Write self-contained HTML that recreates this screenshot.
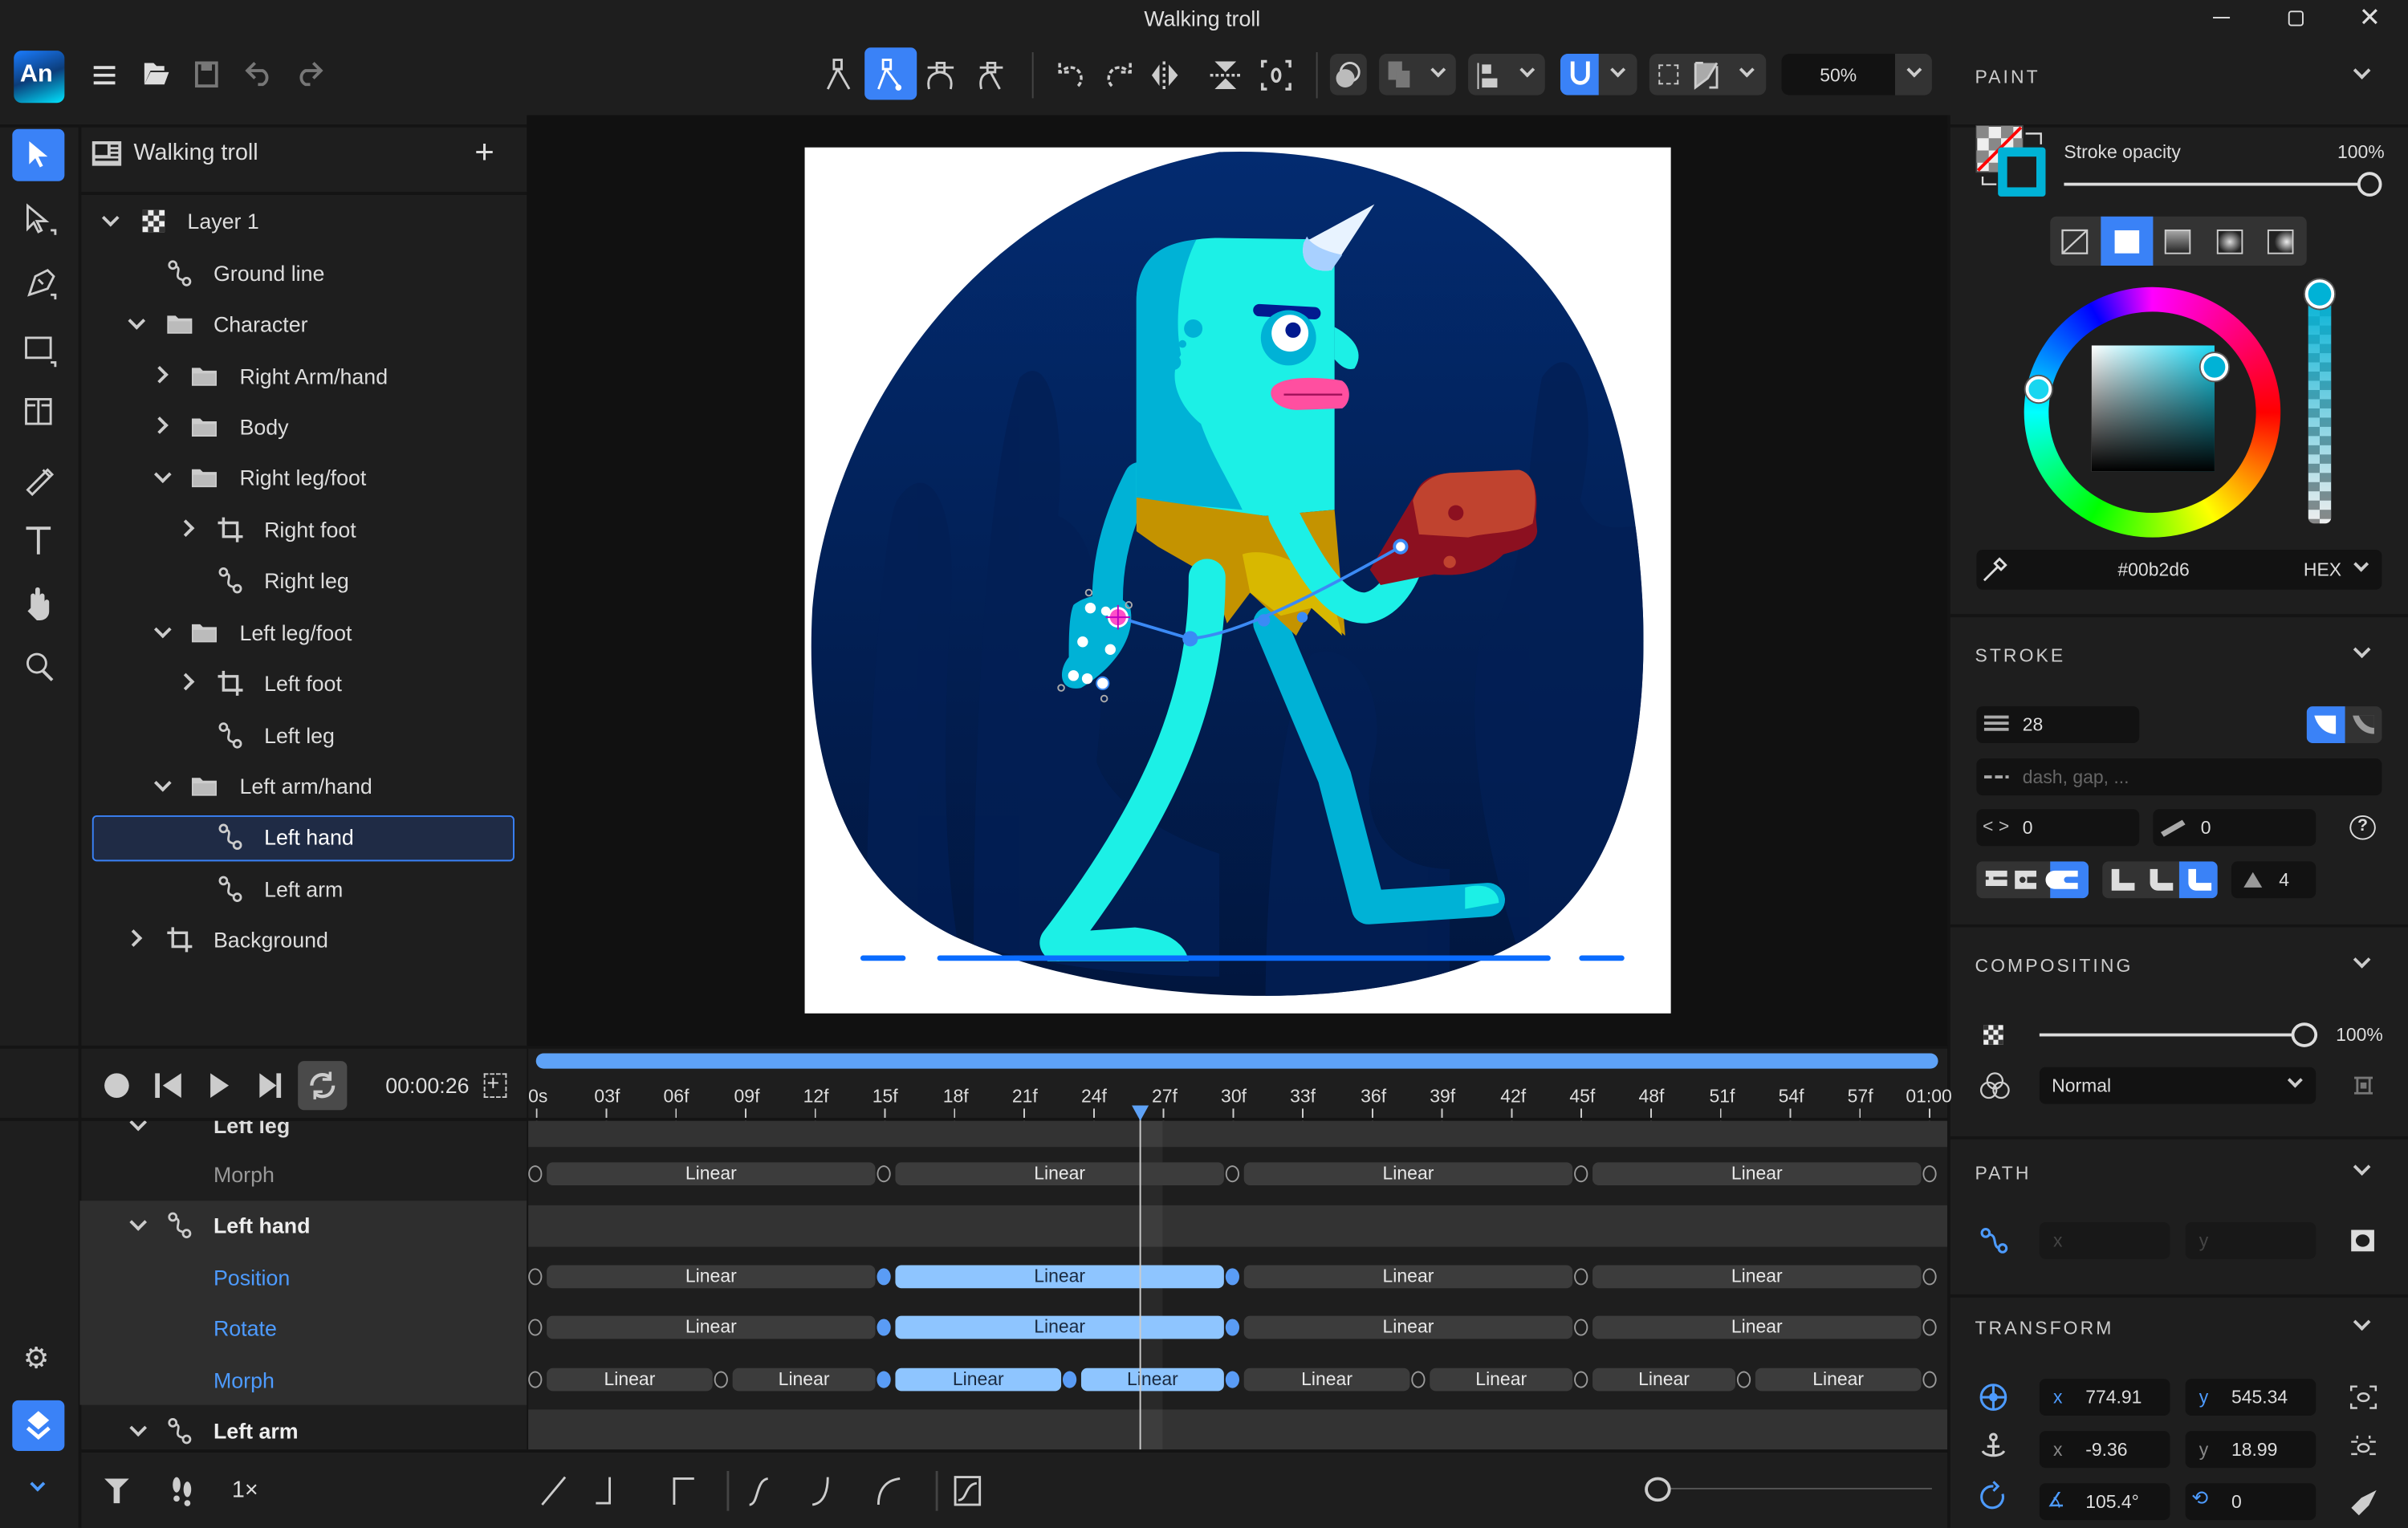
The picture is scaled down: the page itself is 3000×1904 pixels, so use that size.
<!DOCTYPE html>
<html><head><meta charset="utf-8">
<style>
*{margin:0;padding:0;box-sizing:border-box}
html,body{width:3000px;height:1904px;overflow:hidden;background:#1e1e1e}
#w{position:absolute;left:0;top:0;width:1568px;height:995px;transform:scale(1.91327);transform-origin:0 0;background:#1e1e1e;font-family:"Liberation Sans",sans-serif;color:#ddd;font-size:14px}
.a{position:absolute}
.t{position:absolute;white-space:nowrap;line-height:1}
.hd{position:absolute;font-size:12px;letter-spacing:1.6px;color:#ccc;left:1286px}
.chv{position:absolute;width:8px;height:8px;border-right:2px solid #ccc;border-bottom:2px solid #ccc;transform:rotate(45deg)}
.fld{position:absolute;background:#121212;border-radius:4px;height:24px}
.bar{position:absolute;height:15px;border-radius:4px;background:#3c3c3c;color:#e8e8e8;font-size:12px;text-align:center;line-height:15px}
.bar.h{background:#8ec5ff;color:#1a2a40}
.k{position:absolute;width:9px;height:11px;border-radius:50%;border:1.5px solid #999;background:#1e1e1e}
.k.f{background:#5a9cf5;border-color:#5a9cf5}
svg{position:absolute;overflow:visible}
</style></head><body><div id="w">
<svg width="0" height="0" style="position:absolute">
<defs>
<symbol id="pth" viewBox="0 0 20 20"><circle cx="5" cy="4" r="2.6" fill="none" stroke="#ccc" stroke-width="1.6"/><circle cx="15" cy="16" r="2.6" fill="none" stroke="#ccc" stroke-width="1.6"/><path d="M7 5 C12 6 6 12 10 14 L12.5 15" fill="none" stroke="#ccc" stroke-width="1.6"/></symbol>
<symbol id="fold" viewBox="0 0 20 20"><path d="M1 4 h6 l2 2 h10 v11 h-18z" fill="#ccc"/><rect x="2" y="8" width="16" height="8" fill="#bbb"/></symbol>
<symbol id="crop" viewBox="0 0 20 20"><path d="M5 1 v14 h14 M1 5 h14 v14" fill="none" stroke="#ccc" stroke-width="2"/></symbol>
<symbol id="chk" viewBox="0 0 20 20"><rect x="2" y="2" width="16" height="16" fill="#eee"/><path d="M2 2h4v4h-4zM10 2h4v4h-4zM6 6h4v4h-4zM14 6h4v4h-4zM2 10h4v4h-4zM10 10h4v4h-4zM6 14h4v4h-4zM14 14h4v4h-4z" fill="#333"/></symbol>
</defs></svg>

<!-- title bar -->
<div class="t" style="left:745px;top:5px;font-size:14px;color:#e0e0e0">Walking troll</div>
<div class="a" style="left:1441px;top:11px;width:11px;height:1px;background:#ddd"></div>
<div class="a" style="left:1490px;top:7px;width:10px;height:10px;border:1.3px solid #ddd;border-radius:2px"></div>
<div class="t" style="left:1536px;top:3px;font-size:17px;color:#ddd">✕</div>

<!-- logo -->
<div class="a" style="left:9px;top:33px;width:33px;height:34px;border-radius:5px;background:linear-gradient(160deg,#1a7cff,#0c3d7a 50%,#00e5ff)"></div>
<div class="t" style="left:13px;top:41px;font-size:16px;font-weight:bold;color:#fff">An</div>
<svg style="left:60px;top:41px" width="16" height="16"><path d="M1 3h14M1 8h14M1 13h14" stroke="#ddd" stroke-width="2"/></svg>
<svg style="left:93px;top:40px" width="18" height="16"><path d="M1 1h6l2 2h5v3H5L1 15z" fill="#ddd"/><path d="M5 7h12l-3 8H1z" fill="#ddd"/></svg>
<svg style="left:127px;top:40px" width="15" height="17"><rect x="1" y="1" width="13" height="15" fill="none" stroke="#777" stroke-width="2"/><rect x="4" y="1" width="7" height="5" fill="#777"/></svg>
<svg style="left:160px;top:40px" width="17" height="16"><path d="M6 1L1 6l5 5M1 6h10a5 5 0 0 1 0 9H8" fill="none" stroke="#777" stroke-width="2"/></svg>
<svg style="left:193px;top:40px" width="17" height="16"><path d="M11 1l5 5-5 5M16 6H6a5 5 0 0 0 0 9h3" fill="none" stroke="#777" stroke-width="2"/></svg>

<!-- top toolbar -->
<div class="a" style="left:563px;top:31px;width:34px;height:34px;background:#3a82f7;border-radius:4px"></div>
<svg style="left:538px;top:38px" width="120" height="22" stroke="#ccc" stroke-width="1.5" fill="none">
<path d="M5 1h5v6h-5zM7.5 7 L1 20M7.5 7L15 20"/>
<path d="M37 1h5v6h-5zM39 7L34 20M39 7 L47 18" stroke="#fff"/><circle cx="47" cy="19" r="2" fill="#fff" stroke="none"/>
<path d="M72 3h5v6h-5zM66 6h17M74 9C66 10 66 16 67 20M74 9C82 10 82 16 81 20"/>
<path d="M105 3h5v6h-5zM100 6h15M107 9C100 10 100 16 101 20M107 9L113 20"/>
</svg>
<div class="a" style="left:672px;top:34px;width:1px;height:30px;background:#444"></div>
<svg style="left:688px;top:38px" width="160" height="22" stroke="#ccc" stroke-width="1.8" fill="none">
<path d="M14 18 A7 7 0 1 0 4 8 M2 3v6h6" stroke-dasharray="3 1.5"/>
<path d="M36 18 A7 7 0 1 1 46 8 M48 3v6h-6" stroke-dasharray="3 1.5"/>
<path d="M70 2v18" stroke-dasharray="2 2"/><path d="M67 4v14l-5-7zM73 4v14l6-7z" fill="#ccc" stroke="none"/>
<path d="M100 11h20" stroke-dasharray="2 1.5"/><path d="M103 2h14l-7 7zM103 20h14l-7-7z" fill="#ccc" stroke="none"/>
<path d="M137 2h-3v4M149 2h3v4M137 20h-3v-4M149 20h3v-4"/><ellipse cx="143" cy="11" rx="2.5" ry="4"/>
</svg>
<div class="a" style="left:857px;top:34px;width:1px;height:30px;background:#444"></div>
<div class="a" style="left:866px;top:35px;width:24px;height:27px;background:#333;border-radius:5px"></div>
<svg style="left:869px;top:40px" width="18" height="18"><circle cx="10" cy="7" r="6" fill="none" stroke="#ccc" stroke-width="1.5"/><circle cx="7" cy="11" r="6" fill="#bbb"/></svg>
<div class="a" style="left:898px;top:35px;width:50px;height:27px;background:#333;border-radius:5px"></div>
<div class="a" style="left:904px;top:40px;width:9px;height:12px;background:#777"></div><div class="a" style="left:909px;top:46px;width:9px;height:11px;background:#777"></div>
<div class="chv" style="left:933px;top:42px;width:7px;height:7px"></div>
<div class="a" style="left:956px;top:35px;width:50px;height:27px;background:#333;border-radius:5px"></div>
<div class="a" style="left:962px;top:41px;width:1px;height:17px;background:#ccc"></div><div class="a" style="left:965px;top:42px;width:6px;height:6px;background:#ccc"></div><div class="a" style="left:965px;top:51px;width:10px;height:6px;background:#ccc"></div>
<div class="chv" style="left:991px;top:42px;width:7px;height:7px"></div>
<div class="a" style="left:1016px;top:35px;width:50px;height:27px;background:#333;border-radius:5px;overflow:hidden"><div style="width:25px;height:27px;background:#3a82f7"></div></div>
<svg style="left:1021px;top:39px" width="16" height="20"><path d="M3 1v9a5 5 0 0 0 10 0V1" fill="none" stroke="#fff" stroke-width="2.5"/></svg>
<div class="chv" style="left:1050px;top:42px;width:7px;height:7px"></div>
<div class="a" style="left:1074px;top:35px;width:76px;height:27px;background:#333;border-radius:5px"></div>
<div class="a" style="left:1080px;top:42px;width:13px;height:13px;border:1.5px dashed #ccc"></div>
<svg style="left:1102px;top:39px" width="20" height="20"><path d="M2 2h5M2 2v16l8-6 6-10" stroke="#ccc" stroke-width="1.5" fill="#aaa"/><path d="M16 4v14h-5" stroke="#ccc" stroke-width="1.5" fill="none"/></svg>
<div class="chv" style="left:1134px;top:42px;width:7px;height:7px"></div>
<div class="a" style="left:1160px;top:35px;width:98px;height:27px;background:#333;border-radius:5px"></div>
<div class="a" style="left:1160px;top:35px;width:74px;height:27px;background:#121212;border-radius:5px 0 0 5px"></div>
<div class="t" style="left:1185px;top:43px;font-size:12px;color:#ddd">50%</div>
<div class="chv" style="left:1243px;top:42px;width:7px;height:7px"></div>

<!-- left tool column -->
<div class="a" style="left:51px;top:82px;width:2px;height:913px;background:#141414"></div>
<div class="a" style="left:0;top:81px;width:1568px;height:2px;background:#141414"></div>
<div class="a" style="left:8px;top:84px;width:34px;height:34px;background:#3a82f7;border-radius:4px"></div>
<svg style="left:18px;top:91px" width="14" height="20"><path d="M1 1v15l4-4 3 6 2-1-3-6h6z" fill="#fff"/></svg>
<svg style="left:15px;top:132px" width="22" height="300" fill="none" stroke="#ccc" stroke-width="1.5">
<path d="M3 2v15l4-4 3 6 2-1-3-6h6z"/><path d="M18 18h3v3" />
<path d="M4 60l4-12 8-4 4 4-4 8-12 4zM10 50l3 3"/><path d="M18 60h3v3"/>
<rect x="2" y="88" width="16" height="13"/><path d="M18 104h3v3"/>
<path d="M2 128h16v16H2zM10 128v16M2 132h6M12 132h6" />
<path d="M3 187l3-3 10-10 3 3-10 10-3 3zM13 174l5 5"/>
<path d="M2 212h16M10 212v17" stroke-width="2"/>
<path d="M5 264v-8a1.5 1.5 0 0 1 3 0v-4a1.5 1.5 0 0 1 3 0v4a1.5 1.5 0 0 1 3 0v4a1.5 1.5 0 0 1 3 0v6c0 4-3 6-6 6h-2l-6-6" fill="#ccc" stroke="none"/>
<circle cx="9" cy="300" r="6"/><path d="M13 305l6 6" stroke-width="2"/>
</svg>
<div class="t" style="left:15px;top:876px;font-size:19px;color:#ccc">⚙</div>
<div class="a" style="left:8px;top:912px;width:34px;height:33px;background:#3a82f7;border-radius:4px"></div>
<svg style="left:16px;top:918px" width="18" height="22"><path d="M9 1l7 6-7 6-7-6z" fill="#fff"/><path d="M2 12l7 6 7-6" fill="none" stroke="#fff" stroke-width="2.5"/></svg>
<div class="chv" style="left:21px;top:963px;width:7px;height:7px;border-color:#4d9bff"></div>

<!-- layers panel -->
<svg style="left:60px;top:92px" width="19" height="16"><rect x="0" y="0" width="19" height="16" fill="#ccc"/><rect x="2" y="2" width="8" height="7" fill="#1e1e1e"/><path d="M12 3h5M12 6h5M12 9h5M2 12h15" stroke="#1e1e1e" stroke-width="1.5"/></svg>
<div class="t" style="left:87px;top:92px;font-size:15px;color:#ddd">Walking troll</div>
<div class="t" style="left:309px;top:88px;font-size:22px;color:#ddd;font-weight:300">+</div>
<div class="a" style="left:52px;top:125px;width:291px;height:2px;background:#141414"></div>

<div class="a" style="left:60px;top:531px;width:275px;height:30px;border:1px solid #3a82f7;border-radius:3px;background:#1f2b45"></div>

<div class="chv" style="left:68px;top:138px;transform:rotate(45deg)"></div>
<svg style="left:91px;top:135px" width="18" height="18"><use href="#chk"/></svg>
<div class="t" style="left:122px;top:137px">Layer 1</div>
<svg style="left:108px;top:169px" width="18" height="18"><use href="#pth"/></svg>
<div class="t" style="left:139px;top:171px">Ground line</div>
<div class="chv" style="left:85px;top:205px"></div>
<svg style="left:108px;top:202px" width="18" height="18"><use href="#fold"/></svg>
<div class="t" style="left:139px;top:204px">Character</div>
<div class="chv" style="left:100px;top:240px;transform:rotate(-45deg)"></div>
<svg style="left:124px;top:236px" width="18" height="18"><use href="#fold"/></svg>
<div class="t" style="left:156px;top:238px">Right Arm/hand</div>
<div class="chv" style="left:100px;top:273px;transform:rotate(-45deg)"></div>
<svg style="left:124px;top:269px" width="18" height="18"><use href="#fold"/></svg>
<div class="t" style="left:156px;top:271px">Body</div>
<div class="chv" style="left:102px;top:305px"></div>
<svg style="left:124px;top:302px" width="18" height="18"><use href="#fold"/></svg>
<div class="t" style="left:156px;top:304px">Right leg/foot</div>
<div class="chv" style="left:117px;top:340px;transform:rotate(-45deg)"></div>
<svg style="left:141px;top:336px" width="18" height="18"><use href="#crop"/></svg>
<div class="t" style="left:172px;top:338px">Right foot</div>
<svg style="left:141px;top:369px" width="18" height="18"><use href="#pth"/></svg>
<div class="t" style="left:172px;top:371px">Right leg</div>
<div class="chv" style="left:102px;top:406px"></div>
<svg style="left:124px;top:403px" width="18" height="18"><use href="#fold"/></svg>
<div class="t" style="left:156px;top:405px">Left leg/foot</div>
<div class="chv" style="left:117px;top:440px;transform:rotate(-45deg)"></div>
<svg style="left:141px;top:436px" width="18" height="18"><use href="#crop"/></svg>
<div class="t" style="left:172px;top:438px">Left foot</div>
<svg style="left:141px;top:470px" width="18" height="18"><use href="#pth"/></svg>
<div class="t" style="left:172px;top:472px">Left leg</div>
<div class="chv" style="left:102px;top:506px"></div>
<svg style="left:124px;top:503px" width="18" height="18"><use href="#fold"/></svg>
<div class="t" style="left:156px;top:505px">Left arm/hand</div>
<svg style="left:141px;top:536px" width="18" height="18"><use href="#pth"/></svg>
<div class="t" style="left:172px;top:538px;color:#fff">Left hand</div>
<svg style="left:141px;top:570px" width="18" height="18"><use href="#pth"/></svg>
<div class="t" style="left:172px;top:572px">Left arm</div>
<div class="chv" style="left:83px;top:607px;transform:rotate(-45deg)"></div>
<svg style="left:108px;top:603px" width="18" height="18"><use href="#crop"/></svg>
<div class="t" style="left:139px;top:605px">Background</div>

<!-- canvas area -->
<div class="a" style="left:343px;top:75px;width:925px;height:607px;background:#111"></div>
<div class="a" style="left:524px;top:96px;width:564px;height:564px;background:#fff;overflow:hidden">
<svg style="left:0;top:0" width="564" height="564" viewBox="0 0 564 564">
<defs><linearGradient id="bg" x1="0" y1="0" x2="0" y2="1"><stop offset="0" stop-color="#032b70"/><stop offset="1" stop-color="#01163e"/></linearGradient>
<clipPath id="bc"><path d="M270 3 C410 -2 510 70 535 210 C560 340 545 470 470 515 C380 570 200 560 100 515 C20 478 0 390 5 300 C15 180 110 30 270 3Z"/></clipPath></defs>
<path d="M270 3 C410 -2 510 70 535 210 C560 340 545 470 470 515 C380 570 200 560 100 515 C20 478 0 390 5 300 C15 180 110 30 270 3Z" fill="url(#bg)"/>
<g fill="#021f55" opacity=".8" clip-path="url(#bc)">
<path d="M40 520 C40 400 50 250 60 230 C80 200 100 230 95 300 C90 380 90 460 100 520Z"/>
<path d="M110 520 C110 420 115 220 140 150 C160 130 170 180 165 240 C190 250 200 300 190 400 C200 430 240 450 270 460 L270 540 C200 540 150 530 110 520Z"/>
<path d="M470 540 C440 450 430 380 440 320 C470 300 470 200 480 150 C500 120 520 160 505 230 C520 260 535 240 560 250 L560 540Z"/>
<path d="M330 330 C360 320 380 360 370 400 C360 440 380 470 420 470 L420 540 L300 560 C300 480 310 360 330 330Z"/>
</g>
<path d="M218 215 C200 250 195 280 198 310" stroke="#00b2d6" stroke-width="20" fill="none" stroke-linecap="round"/>
<path d="M175 298 C185 290 205 288 212 300 C216 320 200 340 180 352 C165 355 165 340 172 332 C172 320 172 305 175 298Z" fill="#00b2d6"/>
<path d="M303 310 L345 410 L367 495 L445 490" stroke="#00b2d6" stroke-width="22" fill="none" stroke-linejoin="round" stroke-linecap="round"/>
<path d="M430 482 C445 478 452 485 452 492 L430 496Z" fill="#1cf0e6"/>
<path d="M216 230 L216 100 C216 70 240 59 270 59 L345 60 L345 236 L300 240 L216 230Z" fill="#1cf0e6"/>
<path d="M216 230 L216 100 C216 70 235 62 255 60 C245 80 240 110 245 135 C235 150 245 170 258 180 C265 200 275 215 285 236Z" fill="#00b2d6"/>
<g fill="#00b2d6"><circle cx="253" cy="118" r="6"/><circle cx="240" cy="140" r="5"/><circle cx="246" cy="128" r="2.5"/></g>
<path d="M216 228 L300 240 L345 236 L352 318 L330 300 L320 318 L290 290 L275 310 L265 280 L230 260 L216 250Z" fill="#c49300"/>
<path d="M285 265 C300 260 320 270 340 280 L350 318 L330 300 L310 305 L290 290Z" fill="#d8b800"/>
<path d="M262 280 C262 350 240 420 165 518" stroke="#1cf0e6" stroke-width="24" fill="none" stroke-linecap="round"/>
<path d="M158 512 L215 508 C235 510 248 518 250 530 L158 530Z" fill="#1cf0e6"/>
<path d="M312 240 C330 275 345 300 365 300 C380 298 392 280 395 262" stroke="#1cf0e6" stroke-width="20" fill="none" stroke-linecap="round"/>
<path d="M368 275 L398 225 C402 215 410 213 420 212 L465 210 C475 212 478 225 476 240 L477 250 C476 260 465 262 455 265 C445 275 430 280 410 278 L375 285Z" fill="#8c1020"/>
<path d="M396 230 C400 218 410 213 420 212 L465 210 C475 212 478 225 474 245 C462 252 448 250 432 254 L400 252Z" fill="#c0432f"/>
<circle cx="424" cy="238" r="5" fill="#8c1020"/><circle cx="420" cy="270" r="4" fill="#c0432f"/>
<path d="M325 62 C322 75 330 82 343 80 L371 37Z" fill="#e8f3ff"/><path d="M325 62 C322 75 330 82 343 80 L350 70 C340 68 330 64 327 58Z" fill="#a8d0ff"/>
<path d="M296 106 L332 108" stroke="#021a8f" stroke-width="8" stroke-linecap="round"/>
<circle cx="315" cy="124" r="18" fill="#00b2d6"/><circle cx="316" cy="121" r="12" fill="#fff"/><circle cx="318" cy="119" r="5" fill="#021a8f"/>
<path d="M345 117 C360 125 364 135 358 144 C352 146 347 140 345 138Z" fill="#1cf0e6"/>
<path d="M306 155 C315 148 340 150 350 152 C356 156 356 166 350 170 L320 171 C305 170 300 160 306 155Z" fill="#ff4fa0"/>
<path d="M312 161 L350 161" stroke="#a0105a" stroke-width="1.2"/>
<path d="M204 306 L251 320 C270 318 300 310 388 260" stroke="#3b8af5" stroke-width="2" fill="none"/>
<circle cx="251" cy="320" r="5" fill="#3b8af5"/><circle cx="299" cy="308" r="4" fill="#3b8af5"/><circle cx="324" cy="306" r="3.5" fill="#3b8af5"/>
<circle cx="388" cy="260" r="4" fill="#fff" stroke="#3b8af5" stroke-width="2"/>
<g fill="#fff"><circle cx="186" cy="300" r="3.5"/><circle cx="196" cy="302" r="3"/><circle cx="181" cy="322" r="3.5"/><circle cx="199" cy="327" r="3.5"/><circle cx="175" cy="344" r="3.5"/><circle cx="184" cy="346" r="3.5"/><circle cx="194" cy="349" r="4" stroke="#3b8af5"/></g>
<circle cx="204" cy="306" r="6" fill="#ff4fc8" stroke="#fff" stroke-width="1.5"/><path d="M196 306h16M204 298v16" stroke="#c000c0" stroke-width="1"/>
<g fill="none" stroke="#aaa" stroke-width="1"><circle cx="185" cy="290" r="2"/><circle cx="211" cy="298" r="2"/><circle cx="167" cy="352" r="2"/><circle cx="195" cy="359" r="2"/></g>
<g stroke="#0a6cff" stroke-width="3.5" stroke-linecap="round"><path d="M38 528H64M88 528H484M506 528H532"/></g>
</svg></div>

<!-- right panel -->
<div class="a" style="left:1268px;top:75px;width:2px;height:920px;background:#141414"></div>
<div class="hd" style="top:43px">PAINT</div><div class="chv" style="left:1534px;top:42px"></div>
<svg style="left:1287px;top:82px" width="50" height="50">
<rect x="0" y="0" width="30" height="30" fill="#eee" stroke="#444"/><path d="M0 0h8v8H0zM16 0h8v8h-8zM8 8h8v8H8zM24 8h6v8h-6zM0 16h8v8H0zM16 16h8v8h-8zM8 24h8v6H8z" fill="#888"/>
<path d="M1 29L29 1" stroke="red" stroke-width="2"/>
<rect x="14" y="14" width="31" height="32" rx="2" fill="#00b2d6"/><rect x="20" y="20" width="19" height="20" fill="#1e1e1e"/>
<path d="M32 5h10v7M4 33v5h9" stroke="#ddd" stroke-width="1.2" fill="none"/>
</svg>
<div class="t" style="left:1344px;top:93px;font-size:12px;color:#ddd">Stroke opacity</div>
<div class="t" style="left:1522px;top:93px;font-size:12px;color:#ddd">100%</div>
<div class="a" style="left:1344px;top:119px;width:192px;height:2px;background:#ddd"></div>
<div class="a" style="left:1535px;top:112px;width:16px;height:16px;border-radius:50%;border:2px solid #ddd;background:#1e1e1e"></div>
<div class="a" style="left:1335px;top:141px;width:167px;height:32px;background:#333;border-radius:4px"></div>
<div class="a" style="left:1368px;top:141px;width:34px;height:32px;background:#3a82f7"></div>
<svg style="left:1342px;top:149px" width="160" height="18">
<rect x="1" y="1" width="16" height="15" fill="none" stroke="#ccc" stroke-width="1.2"/><path d="M1 16L17 1" stroke="#ccc" stroke-width="1.2"/>
<rect x="35" y="1" width="16" height="15" fill="#fff"/>
<defs><linearGradient id="lg" x1="0" y1="0" x2="0" y2="1"><stop offset="0" stop-color="#aaa"/><stop offset="1" stop-color="#222"/></linearGradient><radialGradient id="rg"><stop offset="0" stop-color="#ddd"/><stop offset="1" stop-color="#222"/></radialGradient><radialGradient id="rg2" cx=".75" cy=".5"><stop offset="0" stop-color="#eee"/><stop offset="1" stop-color="#222"/></radialGradient></defs>
<rect x="68" y="1" width="16" height="15" fill="url(#lg)" stroke="#ccc"/><rect x="102" y="1" width="16" height="15" fill="url(#rg)" stroke="#ccc"/><rect x="135" y="1" width="16" height="15" fill="url(#rg2)" stroke="#ccc"/>
</svg>
<div class="a" style="left:1318px;top:187px;width:167px;height:163px;border-radius:50%;background:conic-gradient(from 0deg,#f0f 0deg,#f00 90deg,#ff0 150deg,#0f0 210deg,#0ff 270deg,#00f 330deg,#f0f 360deg)"></div>
<div class="a" style="left:1334px;top:203px;width:135px;height:131px;border-radius:50%;background:#1e1e1e"></div>
<div class="a" style="left:1362px;top:225px;width:80px;height:82px;background:linear-gradient(to bottom,transparent,#000),linear-gradient(to right,#fff,#1ed9f5)"></div>
<div class="a" style="left:1319px;top:245px;width:17px;height:17px;border-radius:50%;border:2.5px solid #fff;background:#19d6f0;box-shadow:0 0 0 1px #555"></div>
<div class="a" style="left:1433px;top:230px;width:18px;height:18px;border-radius:50%;border:2.5px solid #fff;background:#00b2d6;box-shadow:0 0 0 1px #555"></div>
<div class="a" style="left:1503px;top:188px;width:15px;height:153px;border-radius:4px;background:linear-gradient(to bottom,#00b2d6,rgba(0,178,214,0)),repeating-conic-gradient(#888 0 25%,#eee 0 50%) 0 0/15px 12px"></div>
<div class="a" style="left:1501px;top:182px;width:19px;height:19px;border-radius:50%;border:2.5px solid #fff;background:#00b2d6;box-shadow:0 0 0 1px #555"></div>
<div class="a" style="left:1287px;top:358px;width:264px;height:26px;background:#121212;border-radius:4px"></div>
<svg style="left:1290px;top:362px" width="18" height="18"><path d="M2 16l9-9M9 5l4 4M12 2l4 4-3 3-4-4z" stroke="#ddd" stroke-width="1.5" fill="none"/></svg>
<div class="t" style="left:1379px;top:365px;font-size:12px;color:#ddd">#00b2d6</div>
<div class="t" style="left:1500px;top:365px;font-size:12px;color:#ddd">HEX</div>
<div class="chv" style="left:1534px;top:364px;width:7px;height:7px"></div>
<div class="a" style="left:1270px;top:400px;width:298px;height:2px;background:#141414"></div>

<div class="hd" style="top:420px">STROKE</div><div class="chv" style="left:1534px;top:419px"></div>
<div class="fld" style="left:1287px;top:460px;width:106px"></div>
<div class="a" style="left:1292px;top:466px;width:16px;height:2px;background:#aaa;box-shadow:0 4px #aaa,0 8px #aaa"></div>
<div class="t" style="left:1317px;top:466px;font-size:12px">28</div>
<div class="a" style="left:1502px;top:460px;width:49px;height:24px;background:#333;border-radius:4px;overflow:hidden"><div style="width:25px;height:24px;background:#3a82f7"></div></div>
<svg style="left:1506px;top:465px" width="42" height="14"><path d="M1 1h14v12C8 13 3 8 1 1z" fill="#fff"/><path d="M26 1h14v12C33 13 28 8 26 1z" fill="#999"/><path d="M30 1h10v8C36 9 32 6 30 1z" fill="#333"/></svg>
<div class="fld" style="left:1287px;top:494px;width:264px"></div>
<div class="a" style="left:1292px;top:505px;width:16px;height:2px;background:repeating-linear-gradient(90deg,#aaa 0 5px,transparent 5px 7px)"></div>
<div class="t" style="left:1317px;top:500px;font-size:12px;color:#666">dash, gap, ...</div>
<div class="fld" style="left:1287px;top:527px;width:106px"></div>
<div class="t" style="left:1291px;top:532px;font-size:12px;color:#bbb">&lt; &gt;</div><div class="t" style="left:1317px;top:533px;font-size:12px">0</div>
<div class="fld" style="left:1402px;top:527px;width:106px"></div>
<svg style="left:1406px;top:531px" width="18" height="14"><path d="M1 11L15 3l2 3-14 8z" fill="#aaa"/></svg>
<div class="t" style="left:1433px;top:533px;font-size:12px">0</div>
<div class="a" style="left:1530px;top:531px;width:17px;height:16px;border:1.5px solid #ddd;border-radius:50%;font-size:11px;text-align:center;line-height:13px;font-weight:bold">?</div>
<div class="a" style="left:1287px;top:561px;width:73px;height:24px;background:#333;border-radius:4px;overflow:hidden"><div style="margin-left:48px;width:25px;height:24px;background:#3a82f7"></div></div>
<svg style="left:1292px;top:565px" width="66" height="16" fill="#ddd"><path d="M1 2h14v4H6v2h9v4H1v-4h2V6H1z"/><path d="M20 2h14v4h-6v4h6v4H20z"/><circle cx="25" cy="8" r="2" fill="#333"/><path d="M46 2h15v4h-7a2 2 0 0 0 0 4h7v4H46a6 6 0 0 1 0-12z" fill="#fff"/></svg>
<div class="a" style="left:1369px;top:561px;width:75px;height:24px;background:#333;border-radius:4px;overflow:hidden"><div style="margin-left:50px;width:25px;height:24px;background:#3a82f7"></div></div>
<svg style="left:1374px;top:565px" width="66" height="16"><path d="M1 1h5v9h10v5H1z" fill="#ddd"/><path d="M26 1h5v9h10v5H31a5 5 0 0 1-5-5z" fill="#ddd"/><path d="M51 1h5v9h10v5H56a5 5 0 0 1-5-5z" fill="#fff"/></svg>
<div class="fld" style="left:1453px;top:561px;width:55px"></div>
<svg style="left:1460px;top:567px" width="14" height="12"><path d="M7 1l6 10H1z" fill="#999"/></svg>
<div class="t" style="left:1484px;top:567px;font-size:12px">4</div>
<div class="a" style="left:1270px;top:602px;width:298px;height:2px;background:#141414"></div>

<div class="hd" style="top:622px">COMPOSITING</div><div class="chv" style="left:1534px;top:621px"></div>
<svg style="left:1290px;top:666px" width="16" height="16"><use href="#chk"/></svg>
<div class="a" style="left:1328px;top:673px;width:166px;height:2px;background:#ddd"></div>
<div class="a" style="left:1492px;top:666px;width:17px;height:16px;border-radius:50%;border:2px solid #ddd;background:#1e1e1e"></div>
<div class="t" style="left:1521px;top:668px;font-size:12px">100%</div>
<svg style="left:1289px;top:698px" width="20" height="18" fill="none" stroke="#ccc" stroke-width="1.2"><circle cx="10" cy="6" r="5"/><circle cx="6" cy="12" r="5"/><circle cx="14" cy="12" r="5"/></svg>
<div class="fld" style="left:1328px;top:695px;width:180px"></div>
<div class="t" style="left:1336px;top:701px;font-size:12px">Normal</div>
<div class="chv" style="left:1491px;top:700px;width:7px;height:7px"></div>
<svg style="left:1532px;top:701px" width="14" height="12"><path d="M1 1h12M1 11h12M3 1v10M11 1v10" stroke="#777" stroke-width="1.5"/><rect x="5" y="4" width="4" height="4" fill="#777"/></svg>
<div class="a" style="left:1270px;top:740px;width:298px;height:2px;background:#141414"></div>

<div class="hd" style="top:757px">PATH</div><div class="chv" style="left:1534px;top:756px"></div>
<svg style="left:1289px;top:799px" width="20" height="18" fill="none" stroke="#4d9bff" stroke-width="1.6"><circle cx="4" cy="4" r="2.5"/><circle cx="15" cy="14" r="2.5"/><path d="M6 5c6 0 2 8 7 9"/></svg>
<div class="fld" style="left:1328px;top:796px;width:85px;background:#181818"></div><div class="t" style="left:1337px;top:802px;font-size:12px;color:#444">x</div>
<div class="fld" style="left:1423px;top:796px;width:85px;background:#181818"></div><div class="t" style="left:1432px;top:802px;font-size:12px;color:#444">y</div>
<div class="a" style="left:1531px;top:801px;width:15px;height:14px;background:#ddd"></div><div class="a" style="left:1534px;top:804px;width:9px;height:8px;border-radius:50%;background:#1e1e1e"></div>
<div class="a" style="left:1270px;top:843px;width:298px;height:2px;background:#141414"></div>

<div class="hd" style="top:858px">TRANSFORM</div><div class="chv" style="left:1534px;top:857px"></div>
<svg style="left:1288px;top:900px" width="20" height="90" fill="none" stroke="#4d9bff" stroke-width="1.6">
<circle cx="10" cy="10" r="8"/><path d="M2 10h16M10 2v16"/><circle cx="10" cy="10" r="2" fill="#4d9bff"/>
<g stroke="#ccc"><circle cx="10" cy="36" r="2"/><path d="M10 38v10M6 42h8M3 45c2 4 12 4 14 0"/></g>
<path d="M16 73a7 7 0 1 1-6-5M10 65l3 3-3 3"/>
</svg>
<div class="fld" style="left:1328px;top:898px;width:85px"></div><div class="t" style="left:1337px;top:904px;font-size:12px;color:#4d9bff">x</div><div class="t" style="left:1358px;top:904px;font-size:12px">774.91</div>
<div class="fld" style="left:1423px;top:898px;width:85px"></div><div class="t" style="left:1432px;top:904px;font-size:12px;color:#4d9bff">y</div><div class="t" style="left:1453px;top:904px;font-size:12px">545.34</div>
<div class="fld" style="left:1328px;top:932px;width:85px"></div><div class="t" style="left:1337px;top:938px;font-size:12px;color:#888">x</div><div class="t" style="left:1358px;top:938px;font-size:12px">-9.36</div>
<div class="fld" style="left:1423px;top:932px;width:85px"></div><div class="t" style="left:1432px;top:938px;font-size:12px;color:#888">y</div><div class="t" style="left:1453px;top:938px;font-size:12px">18.99</div>
<div class="fld" style="left:1328px;top:966px;width:85px"></div><div class="t" style="left:1333px;top:970px;font-size:13px;color:#4d9bff">∡</div><div class="t" style="left:1358px;top:972px;font-size:12px">105.4°</div>
<div class="fld" style="left:1423px;top:966px;width:85px"></div><div class="t" style="left:1427px;top:969px;font-size:13px;color:#4d9bff">⟲</div><div class="t" style="left:1453px;top:972px;font-size:12px">0</div>
<svg style="left:1530px;top:902px" width="18" height="85" fill="none" stroke="#ccc" stroke-width="1.3">
<path d="M1 4V1h4M13 1h4v3M1 12v3h4M13 15h4v-3"/><ellipse cx="9" cy="8" rx="3.5" ry="2.5"/>
<path d="M1 37h4M13 37h4M1 45h4M13 45h4M5 35v-2M13 35v-2"/><ellipse cx="9" cy="41" rx="3.5" ry="2.5"/>
<path d="M2 80l6-6 8-4-4 8-6 6z" fill="#ccc"/>
</svg>

<!-- timeline -->
<div class="a" style="left:0;top:681px;width:1268px;height:2px;background:#141414"></div>
<div class="a" style="left:343px;top:683px;width:925px;height:45px;background:#1e1e1e"></div>
<div class="a" style="left:343px;top:683px;width:1px;height:262px;background:#141414"></div>
<div class="a" style="left:349px;top:686px;width:913px;height:10px;border-radius:5px;background:#5ea2f7"></div>
<div class="a" style="left:68px;top:699px;width:16px;height:16px;border-radius:50%;background:#ccc"></div>
<svg style="left:101px;top:699px" width="90" height="17" fill="#ccc"><rect x="0" y="0" width="3" height="16"/><path d="M17 0v16L5 8z"/><path d="M36 0v16l12-8z"/><path d="M68 0v16l11-8z"/><rect x="79" y="0" width="3" height="16"/></svg>
<div class="a" style="left:194px;top:691px;width:32px;height:32px;background:#4a4a4a;border-radius:4px"></div>
<svg style="left:200px;top:697px" width="20" height="20" fill="none" stroke="#ccc" stroke-width="2.2"><path d="M3 10a7 7 0 0 1 12-5M17 10a7 7 0 0 1-12 5"/><path d="M15 1v5h-5M5 19v-5h5" stroke-width="1.8"/></svg>
<div class="t" style="left:251px;top:700px;font-size:14px;color:#ddd">00:00:26</div>
<div class="a" style="left:315px;top:699px;width:15px;height:16px;border:1.2px dashed #ccc"></div>
<div class="t" style="left:317px;top:698px;font-size:14px;color:#ddd">+</div>
<div class="a" style="left:343px;top:708px;width:925px;height:24px;font-size:12px;color:#ddd">
<span class="t" style="left:1px;top:0">0s</span><span class="t" style="left:44px;top:0">03f</span><span class="t" style="left:89px;top:0">06f</span><span class="t" style="left:135px;top:0">09f</span><span class="t" style="left:180px;top:0">12f</span><span class="t" style="left:225px;top:0">15f</span><span class="t" style="left:271px;top:0">18f</span><span class="t" style="left:316px;top:0">21f</span><span class="t" style="left:361px;top:0">24f</span><span class="t" style="left:407px;top:0">27f</span><span class="t" style="left:452px;top:0">30f</span><span class="t" style="left:497px;top:0">33f</span><span class="t" style="left:543px;top:0">36f</span><span class="t" style="left:588px;top:0">39f</span><span class="t" style="left:634px;top:0">42f</span><span class="t" style="left:679px;top:0">45f</span><span class="t" style="left:724px;top:0">48f</span><span class="t" style="left:770px;top:0">51f</span><span class="t" style="left:815px;top:0">54f</span><span class="t" style="left:860px;top:0">57f</span><span class="t" style="left:898px;top:0">01:00</span>
</div>
<div class="a" style="left:349px;top:722px;width:920px;height:9px;background:repeating-linear-gradient(90deg,#ccc 0 1px,transparent 1px 45.35px)"></div>
<div class="a" style="left:0;top:728px;width:1268px;height:2px;background:#141414"></div>
<div class="a" style="left:52px;top:730px;width:291px;height:215px;overflow:hidden">
<div class="a" style="left:0;top:52px;width:291px;height:133px;background:#2e2e2e"></div>
<div class="chv" style="left:34px;top:-3px"></div>
<div class="t" style="left:87px;top:-4px;font-weight:bold;color:#ddd">Left leg</div>
<div class="t" style="left:87px;top:28px;color:#999">Morph</div>
<div class="chv" style="left:34px;top:62px"></div>
<svg style="left:56px;top:59px" width="18" height="18"><use href="#pth"/></svg>
<div class="t" style="left:87px;top:61px;font-weight:bold;color:#eee">Left hand</div>
<div class="t" style="left:87px;top:95px;color:#4d9bff">Position</div>
<div class="t" style="left:87px;top:128px;color:#4d9bff">Rotate</div>
<div class="t" style="left:87px;top:162px;color:#4d9bff">Morph</div>
<div class="chv" style="left:34px;top:196px"></div>
<svg style="left:56px;top:193px" width="18" height="18"><use href="#pth"/></svg>
<div class="t" style="left:87px;top:195px;font-weight:bold;color:#eee">Left arm</div>
</div>
<div class="a" style="left:344px;top:730px;width:924px;height:17px;background:#333"></div>
<div class="a" style="left:344px;top:785px;width:924px;height:27px;background:#333"></div>
<div class="a" style="left:344px;top:918px;width:924px;height:27px;background:#333"></div>
<div class="a" style="left:743px;top:730px;width:14px;height:215px;background:rgba(255,255,255,.05)"></div>
<div class="bar" style="left:356px;top:757px;width:214px">Linear</div><div class="bar" style="left:583px;top:757px;width:214px">Linear</div><div class="bar" style="left:810px;top:757px;width:214px">Linear</div><div class="bar" style="left:1037px;top:757px;width:214px">Linear</div>
<div class="k" style="left:344px;top:759px"></div><div class="k" style="left:571px;top:759px"></div><div class="k" style="left:798px;top:759px"></div><div class="k" style="left:1025px;top:759px"></div><div class="k" style="left:1252px;top:759px"></div>
<div class="bar" style="left:356px;top:824px;width:214px">Linear</div><div class="bar h" style="left:583px;top:824px;width:214px">Linear</div><div class="bar" style="left:810px;top:824px;width:214px">Linear</div><div class="bar" style="left:1037px;top:824px;width:214px">Linear</div>
<div class="k" style="left:344px;top:826px"></div><div class="k f" style="left:571px;top:826px"></div><div class="k f" style="left:798px;top:826px"></div><div class="k" style="left:1025px;top:826px"></div><div class="k" style="left:1252px;top:826px"></div>
<div class="bar" style="left:356px;top:857px;width:214px">Linear</div><div class="bar h" style="left:583px;top:857px;width:214px">Linear</div><div class="bar" style="left:810px;top:857px;width:214px">Linear</div><div class="bar" style="left:1037px;top:857px;width:214px">Linear</div>
<div class="k" style="left:344px;top:859px"></div><div class="k f" style="left:571px;top:859px"></div><div class="k f" style="left:798px;top:859px"></div><div class="k" style="left:1025px;top:859px"></div><div class="k" style="left:1252px;top:859px"></div>
<div class="bar" style="left:356px;top:891px;width:108px">Linear</div><div class="bar" style="left:477px;top:891px;width:93px">Linear</div><div class="bar h" style="left:583px;top:891px;width:108px">Linear</div><div class="bar h" style="left:704px;top:891px;width:93px">Linear</div><div class="bar" style="left:810px;top:891px;width:108px">Linear</div><div class="bar" style="left:931px;top:891px;width:93px">Linear</div><div class="bar" style="left:1037px;top:891px;width:93px">Linear</div><div class="bar" style="left:1143px;top:891px;width:108px">Linear</div>
<div class="k" style="left:344px;top:893px"></div><div class="k" style="left:465px;top:893px"></div><div class="k f" style="left:571px;top:893px"></div><div class="k f" style="left:692px;top:893px"></div><div class="k f" style="left:798px;top:893px"></div><div class="k" style="left:919px;top:893px"></div><div class="k" style="left:1025px;top:893px"></div><div class="k" style="left:1131px;top:893px"></div><div class="k" style="left:1252px;top:893px"></div>
<div class="a" style="left:742px;top:724px;width:1px;height:221px;background:#ccc"></div>
<svg style="left:737px;top:720px" width="11" height="11"><path d="M0 0h11L5.5 10z" fill="#5ea2f7"/></svg>

<!-- bottom bar -->
<div class="a" style="left:52px;top:944px;width:1216px;height:2px;background:#141414"></div>
<svg style="left:67px;top:962px" width="18" height="18"><path d="M1 1h16l-6 6v10h-4V7z" fill="#ccc"/></svg>
<svg style="left:111px;top:961px" width="16" height="20" fill="#ccc"><ellipse cx="4" cy="6" rx="2.5" ry="5"/><ellipse cx="11" cy="9" rx="2.5" ry="5"/><circle cx="4" cy="15" r="2"/><circle cx="11" cy="18" r="2"/></svg>
<div class="t" style="left:151px;top:963px;font-size:15px;color:#ddd">1×</div>
<svg style="left:352px;top:960px" width="290" height="22" fill="none" stroke="#ccc" stroke-width="1.5">
<path d="M1 20L16 2"/><path d="M45 2v17H36"/><path d="M100 3H87v17"/>
<line x1="122" y1="-2" x2="122" y2="24" stroke="#444"/>
<path d="M136 20c6 0 4-16 12-17"/><path d="M177 20c8-1 10-10 10-18"/><path d="M220 20c0-10 5-16 14-17"/>
<line x1="258" y1="-2" x2="258" y2="24" stroke="#444"/>
<rect x="270" y="2" width="16" height="18"/><path d="M272 17c6 0 4-10 12-11"/>
</svg>
<div class="a" style="left:1087px;top:969px;width:171px;height:1px;background:#555"></div>
<div class="a" style="left:1071px;top:962px;width:17px;height:16px;border-radius:50%;border:2px solid #ccc;background:#1e1e1e"></div>
</div></body></html>
